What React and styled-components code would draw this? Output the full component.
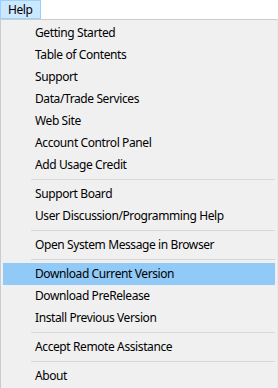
import React from "react";
import styled, { createGlobalStyle } from "styled-components";

const Global = createGlobalStyle`
  html, body { margin: 0; padding: 0; background: #ffffff; }
  body { font-family: "Noto Sans", "Liberation Sans", sans-serif; font-size: 12px; color: #000; letter-spacing: -0.4px; }
`;

const Page = styled.div`
  width: 278px;
  height: 388px;
  overflow: hidden;
  background: #ffffff;
`;

const MenuBar = styled.div`
  display: flex;
  height: 19px;
  background: #ffffff;
`;

const BarItem = styled.div`
  display: flex;
  align-items: center;
  box-sizing: border-box;
  height: 19px;
  padding: 0 7px 1px 7px;
  background: ${(p) => (p.$open ? "#cce8ff" : "transparent")};
  border: 1px solid ${(p) => (p.$open ? "#99d1ff" : "transparent")};
  font-size: 12px;
`;

const Dropdown = styled.div`
  box-sizing: border-box;
  width: 278px;
  background: #f0f0f0;
  border: 1px solid #cccccc;
  border-right-color: #e8e8e8;
  padding: 2px;
`;

const Item = styled.div`
  display: flex;
  align-items: center;
  height: 22px;
  padding: 0 0 1px 32px;
  box-sizing: border-box;
  background: ${(p) => (p.$hover ? "#91c9f7" : "transparent")};
  white-space: nowrap;
`;

const Separator = styled.div`
  height: 1px;
  margin: 3px 0 3px 28px;
  background: #d7d7d7;
`;

const groups = [
  ["Getting Started", "Table of Contents", "Support", "Data/Trade Services", "Web Site", "Account Control Panel", "Add Usage Credit"],
  ["Support Board", "User Discussion/Programming Help"],
  ["Open System Message in Browser"],
  ["Download Current Version", "Download PreRelease", "Install Previous Version"],
  ["Accept Remote Assistance"],
  ["About"],
];

export default function App() {
  return (
    <Page>
      <Global />
      <MenuBar>
        <BarItem $open>Help</BarItem>
      </MenuBar>
      <Dropdown>
        {groups.map((g, gi) => (
          <React.Fragment key={gi}>
            {gi > 0 && <Separator />}
            {g.map((label) => (
              <Item key={label} $hover={label === "Download Current Version"}>
                {label}
              </Item>
            ))}
          </React.Fragment>
        ))}
      </Dropdown>
    </Page>
  );
}
